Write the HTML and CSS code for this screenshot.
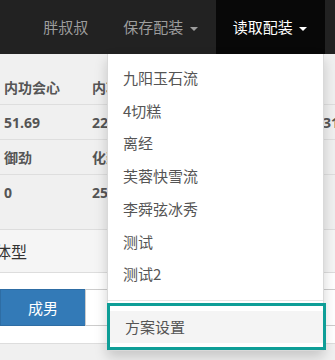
FILE: index.html
```html
<!DOCTYPE html>
<html lang="zh-CN">
<head>
  <meta charset="UTF-8" />
  <meta name="viewport" content="width=device-width, initial-scale=1.0" />
  <title>配装</title>
  <link rel="stylesheet" href="styles.css">
</head>
<body>
  <nav class="navbar">
    <ul class="nav">
      <li><a href="#">胖叔叔</a></li>
      <li><a href="#">保存配装 <span class="caret"></span></a></li>
      <li class="open">
        <a href="#">读取配装 <span class="caret"></span></a>
        <ul class="dropdown-menu">
          <li><a href="#">九阳玉石流</a></li>
          <li><a href="#">4切糕</a></li>
          <li><a href="#">离经</a></li>
          <li><a href="#">芙蓉快雪流</a></li>
          <li><a href="#">李舜弦冰秀</a></li>
          <li><a href="#">测试</a></li>
          <li><a href="#">测试2</a></li>
          <li class="divider"></li>
          <li class="focused"><a href="#">方案设置</a></li>
        </ul>
      </li>
    </ul>
  </nav>

  <table class="stats">
    <colgroup>
      <col class="c1"><col class="c2"><col class="c3"><col class="c4">
    </colgroup>
    <tr><td>内功会心</td><td>内功破防</td><td>内功命中</td><td></td></tr>
    <tr><td>51.69</td><td>2210</td><td>96.5</td><td>31</td></tr>
    <tr><td>御劲</td><td>化劲</td><td>闪避</td><td></td></tr>
    <tr><td>0</td><td>25</td><td>0</td><td></td></tr>
  </table>

  <div class="panel">
    <div class="panel-heading"><span class="panel-title">体型</span></div>
    <div class="panel-body">
      <div class="btn-group">
        <button class="btn active">成男</button>
        <button class="btn">成女</button>
        <button class="btn">正太</button>
        <button class="btn">萝莉</button>
      </div>
    </div>
  </div>
</body>
</html>
```

FILE: styles.css
```css
body {
  margin: 0;
  width: 335px;
  height: 360px;
  overflow: hidden;
  background: #f0f0f0;
  font-family: 'Open Sans', 'Noto Sans CJK SC', sans-serif;
  font-size: 14px;
  color: #333;
}
a {
  text-decoration: none;
}
.navbar {
  background: #222;
  height: 54px;
  display: flex;
  justify-content: flex-end;
  padding-right: 10px;
  position: relative;
  z-index: 2;
}
.nav {
  list-style: none;
  margin: 0;
  padding: 0;
  display: flex;
}
.nav > li {
  position: relative;
}
.nav > li > a {
  display: block;
  line-height: 54px;
  padding: 0 18px 0 17px;
  color: #9d9d9d;
  font-size: 15px;
  font-family: 'Noto Sans CJK SC', sans-serif;
}
.nav > li.open > a {
  background: #080808;
  color: #fff;
}
.caret {
  display: inline-block;
  width: 0;
  height: 0;
  margin-left: 3px;
  vertical-align: middle;
  border-top: 4px solid;
  border-left: 4px solid transparent;
  border-right: 4px solid transparent;
}
.dropdown-menu {
  position: absolute;
  top: 100%;
  right: 1px;
  width: 217px;
  box-sizing: border-box;
  list-style: none;
  margin: 0;
  padding: 8px 0 0;
  background: #fff;
  border: 1px solid rgba(0,0,0,0.15);
  border-top: 0;
  box-shadow: 0 6px 12px rgba(0,0,0,0.175);
}
.dropdown-menu a {
  display: block;
  padding: 6px 15px;
  line-height: 20.7px;
  font-size: 15px;
  color: #555;
  font-family: 'Noto Sans CJK SC', sans-serif;
}
.dropdown-menu .divider {
  height: 1px;
  background: #e5e5e5;
  margin: 9px 0 2px;
}
.dropdown-menu .focused {
  border: 3px solid #0e9e97;
  padding: 5px 0 4px;
  margin: 0 -3px 0 -1px;
  background: #fff;
}
.dropdown-menu .focused a {
  background: #f4f4f4;
  padding: 5.5px 15px;
  line-height: 21px;
}
.stats {
  margin-top: 16px;
  width: 420px;
  table-layout: fixed;
  border-collapse: collapse;
  font-weight: bold;
  color: #555;
  white-space: nowrap;
}
.stats .c1, .stats .c2 {
  width: 88px;
}
.stats .c3 {
  width: 143px;
}
.stats td {
  height: 34px;
  padding: 0 4px;
  overflow: hidden;
  border-bottom: 1px solid #dedede;
}
.stats tr:last-child td {
  border-bottom: 0;
}
.panel {
  margin-top: 20px;
  background: #fff;
  border-top: 1px solid #ddd;
  border-bottom: 1px solid #ddd;
}
.panel-heading {
  height: 42px;
  line-height: 42px;
  background: #f5f5f5;
  border-bottom: 1px solid #ddd;
  font-size: 16px;
  font-family: 'Noto Sans CJK SC', sans-serif;
}
.panel-title {
  margin-left: -5px;
}
.panel-body {
  padding: 16px 0 17px;
}
.btn-group {
  display: flex;
}
.btn {
  width: 86px;
  height: 37px;
  flex-shrink: 0;
  border: 1px solid #ccc;
  background: #fff;
  color: #333;
  font-size: 15px;
  font-family: 'Noto Sans CJK SC', sans-serif;
  margin-left: -1px;
  padding: 0;
}
.btn:first-child {
  margin-left: 0;
}
.btn.active {
  background: #337ab7;
  border-color: #2e6da4;
  color: #fff;
}
```
